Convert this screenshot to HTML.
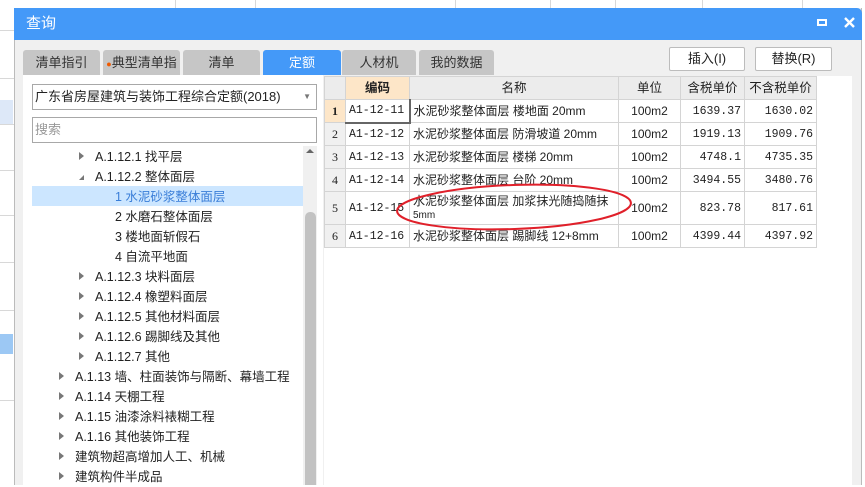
<!DOCTYPE html>
<html><head><meta charset="utf-8"><style>
*{box-sizing:border-box;margin:0;padding:0}
body{width:865px;height:485px;overflow:hidden;background:#fff;position:relative;font-family:"Liberation Sans","Noto Sans CJK SC",sans-serif;font-size:12px;color:#222}
.a{position:absolute}
.grid{position:absolute;background:#d8d8d8}
.tab{position:absolute;top:50px;height:25px;background:#c6c6c6;border-radius:3px 3px 0 0;text-align:center;line-height:25px;font-size:13px;color:#333}
.tree div{position:absolute;height:20px;line-height:20px;font-size:12.5px;white-space:nowrap}
.tri{display:inline-block;width:0;height:0;border-left:5px solid #777;border-top:4px solid transparent;border-bottom:4px solid transparent;margin-right:11px;vertical-align:1px}
table{border-collapse:collapse;position:absolute;left:324px;top:76px}
td{border:1px solid #d4d4d4;font-size:12px;height:23px;line-height:21px;padding:0 3px;white-space:nowrap;vertical-align:middle}
td.m{font-family:"Liberation Mono",monospace;font-size:11.5px}
.h td{background:#ececec;text-align:center;font-size:12.5px}
.n{background:#f0f0f0;text-align:center;font-family:"Liberation Serif",serif}
.r{text-align:right}.c{text-align:center}
</style></head><body>
<div class="grid" style="left:0;top:30px;width:14px;height:1px"></div>
<div class="grid" style="left:0;top:78px;width:14px;height:1px"></div>
<div class="grid" style="left:0;top:124px;width:14px;height:1px"></div>
<div class="a" style="left:0;top:100px;width:13px;height:24px;background:#dde8f8"></div>
<div class="a" style="left:0;top:334px;width:13px;height:20px;background:#9cc8f4"></div>
<div class="grid" style="left:0;top:170px;width:14px;height:1px"></div>
<div class="grid" style="left:0;top:215px;width:14px;height:1px"></div>
<div class="grid" style="left:0;top:262px;width:14px;height:1px"></div>
<div class="grid" style="left:0;top:310px;width:14px;height:1px"></div>
<div class="grid" style="left:0;top:400px;width:14px;height:1px"></div>
<div class="grid" style="left:175px;top:0;width:1px;height:8px"></div>
<div class="grid" style="left:255px;top:0;width:1px;height:8px"></div>
<div class="grid" style="left:455px;top:0;width:1px;height:8px"></div>
<div class="grid" style="left:550px;top:0;width:1px;height:8px"></div>
<div class="grid" style="left:615px;top:0;width:1px;height:8px"></div>
<div class="grid" style="left:702px;top:0;width:1px;height:8px"></div>
<div class="grid" style="left:802px;top:0;width:1px;height:8px"></div>
<div class="a" style="left:14px;top:8px;width:848px;height:477px;background:#f0f0f0;border-left:1px solid #bbb;border-right:1px solid #bbb"></div>
<div class="a" style="left:14px;top:8px;width:848px;height:32px;background:#4499f8;border-radius:0 5px 0 0;color:#fff;font-size:15px;line-height:32px;padding-left:12px">查询</div>
<div class="a" style="left:817px;top:19px;width:10px;height:7px;border:2px solid #fff"></div>
<svg class="a" style="left:844px;top:17px" width="11" height="11"><path d="M1 1L10 10M10 1L1 10" stroke="#fff" stroke-width="2.4"/></svg>
<div class="tab" style="left:23px;width:77px">清单指引</div>
<div class="tab" style="left:103px;width:77px"><span style="color:#f05a00;font-size:9px">●</span>典型清单指引</div>
<div class="tab" style="left:183px;width:77px">清单</div>
<div class="tab" style="left:263px;width:78px;background:#4499f8;color:#fff">定额</div>
<div class="tab" style="left:342px;width:74px">人材机</div>
<div class="tab" style="left:419px;width:75px">我的数据</div>
<div class="a" style="left:669px;top:47px;width:76px;height:24px;background:#fff;border:1px solid #bcbcbc;border-radius:2px;text-align:center;line-height:22px;font-size:13px">插入(I)</div>
<div class="a" style="left:755px;top:47px;width:77px;height:24px;background:#fff;border:1px solid #bcbcbc;border-radius:2px;text-align:center;line-height:22px;font-size:13px">替换(R)</div>
<div class="a" style="left:23px;top:75px;width:300px;height:410px;background:#fff"></div>
<div class="a" style="left:32px;top:84px;width:285px;height:26px;border:1px solid #a8a8a8;background:#fff;line-height:24px;padding-left:2px;font-size:13px">广东省房屋建筑与装饰工程综合定额(2018)<span style="position:absolute;right:5px;top:0;color:#777;font-size:8px">▼</span></div>
<div class="a" style="left:32px;top:117px;width:285px;height:26px;border:1px solid #a8a8a8;background:#fff;line-height:24px;padding-left:2px;font-size:13px;color:#999">搜索</div>
<div class="a" style="left:303px;top:146px;width:14px;height:339px;background:#f0f0f0"></div>
<div class="a" style="left:305px;top:212px;width:11px;height:273px;background:#c2c2c2;border-radius:5px 5px 0 0"></div>
<div class="a" style="left:306px;top:149px;width:0;height:0;border-left:4px solid transparent;border-right:4px solid transparent;border-bottom:4px solid #666"></div>
<div class="a" style="left:32px;top:186px;width:271px;height:20px;background:#cce6ff"></div>
<div class="tree">
<div style="left:79px;top:147px"><span class="tri"></span>A.1.12.1 找平层</div>
<div style="left:79px;top:167px"><span class="tri" style="border:0;border-right:5px solid #777;border-top:5px solid transparent;margin-right:11px"></span>A.1.12.2 整体面层</div>
<div style="left:115px;top:187px;color:#3a7ed8">1 水泥砂浆整体面层</div>
<div style="left:115px;top:207px">2 水磨石整体面层</div>
<div style="left:115px;top:227px">3 楼地面斩假石</div>
<div style="left:115px;top:247px">4 自流平地面</div>
<div style="left:79px;top:267px"><span class="tri"></span>A.1.12.3 块料面层</div>
<div style="left:79px;top:287px"><span class="tri"></span>A.1.12.4 橡塑料面层</div>
<div style="left:79px;top:307px"><span class="tri"></span>A.1.12.5 其他材料面层</div>
<div style="left:79px;top:327px"><span class="tri"></span>A.1.12.6 踢脚线及其他</div>
<div style="left:79px;top:347px"><span class="tri"></span>A.1.12.7 其他</div>
<div style="left:59px;top:367px"><span class="tri"></span>A.1.13 墙、柱面装饰与隔断、幕墙工程</div>
<div style="left:59px;top:387px"><span class="tri"></span>A.1.14 天棚工程</div>
<div style="left:59px;top:407px"><span class="tri"></span>A.1.15 油漆涂料裱糊工程</div>
<div style="left:59px;top:427px"><span class="tri"></span>A.1.16 其他装饰工程</div>
<div style="left:59px;top:447px"><span class="tri"></span>建筑物超高增加人工、机械</div>
<div style="left:59px;top:467px"><span class="tri"></span>建筑构件半成品</div>
</div>
<div class="a" style="left:324px;top:76px;width:528px;height:409px;background:#fff"></div>
<table>
<tr class="h"><td style="width:21px"></td><td style="width:64px;background:#fde6c8;font-weight:bold">编码</td><td style="width:209px">名称</td><td style="width:62px">单位</td><td style="width:64px">含税单价</td><td style="width:72px">不含税单价</td></tr>
<tr><td class="n" style="background:#fde6c8;font-weight:bold">1</td><td class="m" style="border:1px solid #3a7ed8;border-right:2px solid #666;border-bottom:2px solid #666">A1-12-11</td><td>水泥砂浆整体面层 楼地面 20mm</td><td class="c">100m2</td><td class="r m">1639.37</td><td class="r m">1630.02</td></tr>
<tr><td class="n">2</td><td class="m">A1-12-12</td><td>水泥砂浆整体面层 防滑坡道 20mm</td><td class="c">100m2</td><td class="r m">1919.13</td><td class="r m">1909.76</td></tr>
<tr><td class="n">3</td><td class="m">A1-12-13</td><td>水泥砂浆整体面层 楼梯 20mm</td><td class="c">100m2</td><td class="r m">4748.1</td><td class="r m">4735.35</td></tr>
<tr><td class="n">4</td><td class="m">A1-12-14</td><td>水泥砂浆整体面层 台阶 20mm</td><td class="c">100m2</td><td class="r m">3494.55</td><td class="r m">3480.76</td></tr>
<tr><td class="n" style="height:33px">5</td><td class="m">A1-12-15</td><td style="line-height:13px">水泥砂浆整体面层 加浆抹光随捣随抹<br><span style="font-size:10px">5mm</span></td><td class="c">100m2</td><td class="r m">823.78</td><td class="r m">817.61</td></tr>
<tr><td class="n">6</td><td class="m">A1-12-16</td><td>水泥砂浆整体面层 踢脚线 12+8mm</td><td class="c">100m2</td><td class="r m">4399.44</td><td class="r m">4397.92</td></tr>
</table>
<svg class="a" style="left:380px;top:175px" width="270" height="70"><ellipse cx="134" cy="32" rx="117" ry="22" fill="none" stroke="#e0202a" stroke-width="2" transform="rotate(-2 134 32)"/></svg>
</body></html>
